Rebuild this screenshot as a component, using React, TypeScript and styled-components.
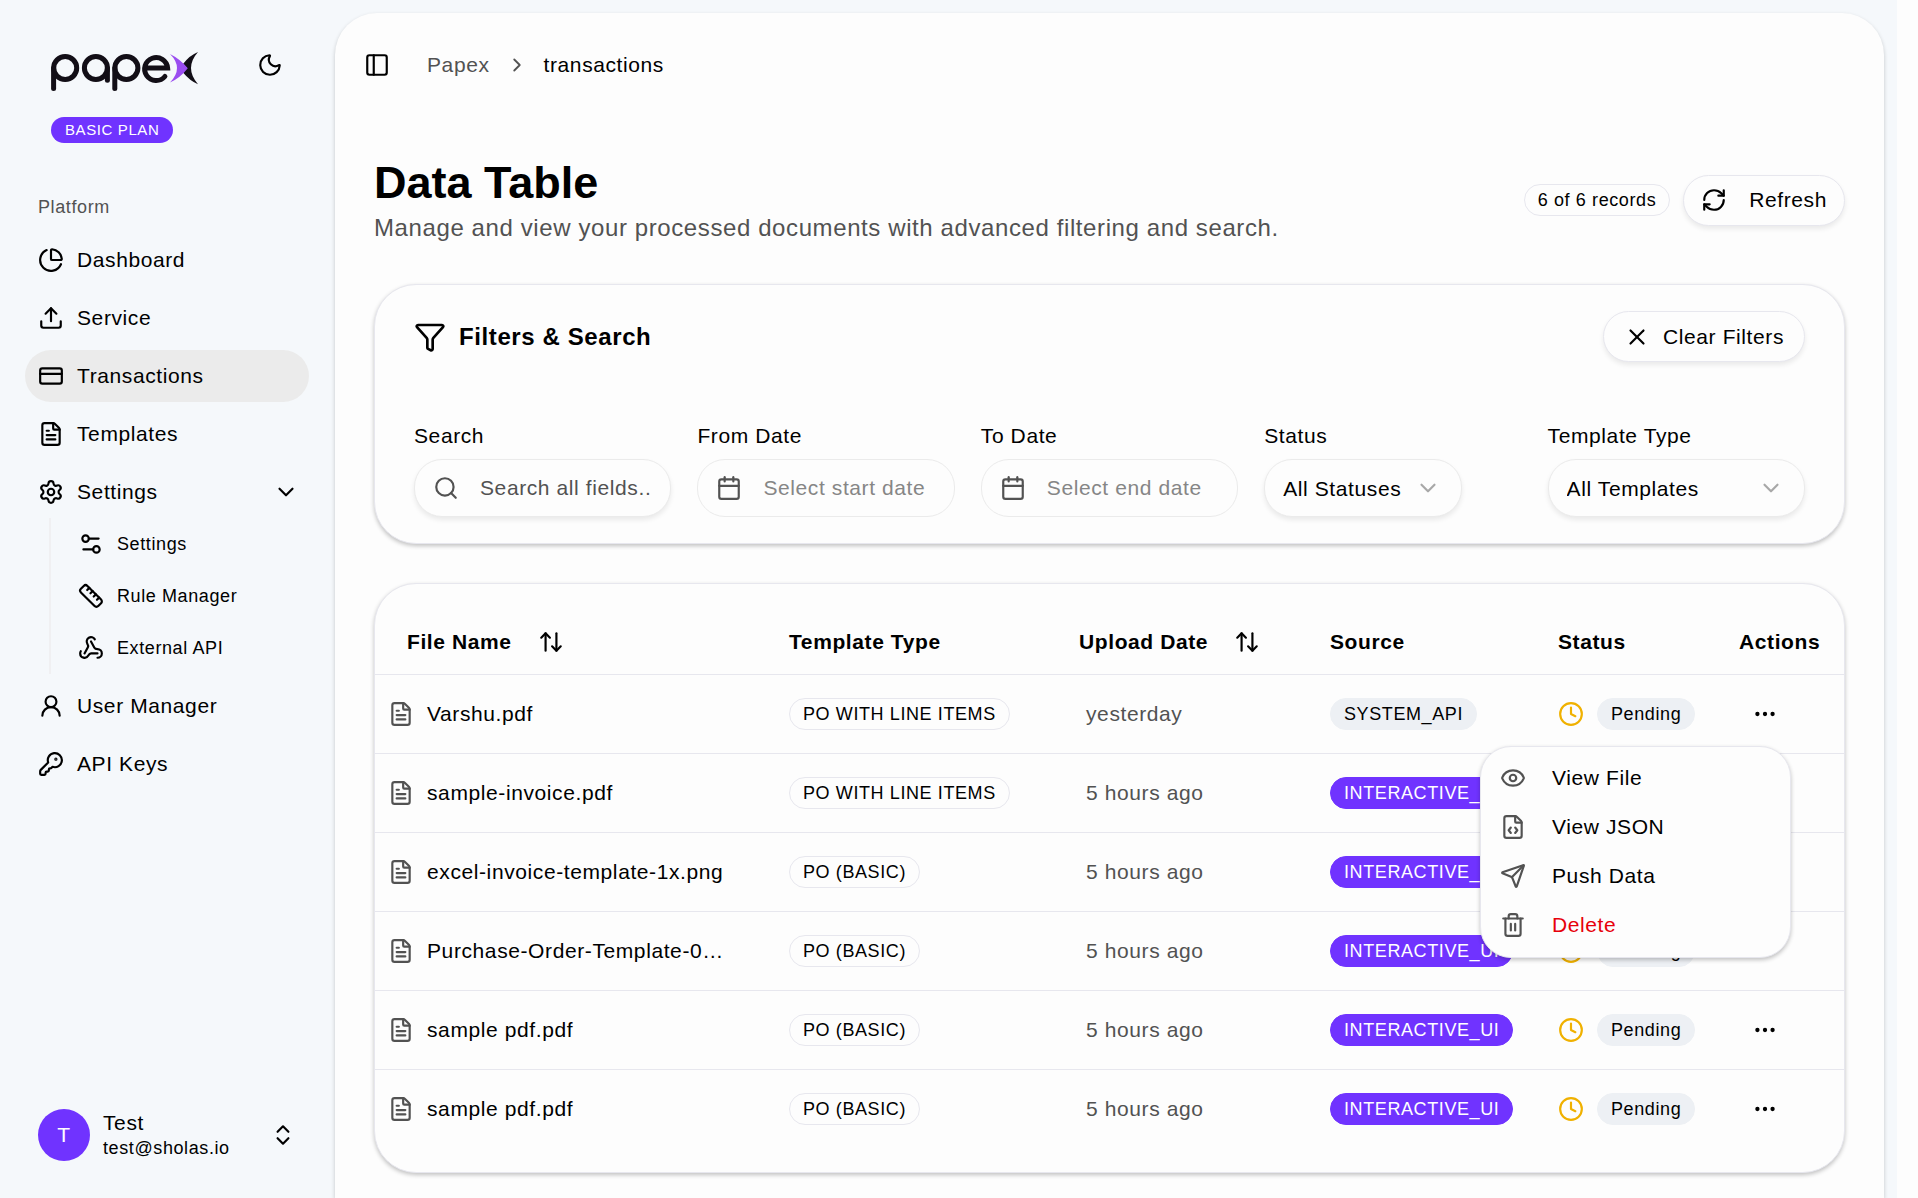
import React from "react";
import styled, { createGlobalStyle, css } from "styled-components";
import {
  ArrowUpDown,
  Calendar,
  ChartPie,
  ChevronDown,
  ChevronRight,
  ChevronsUpDown,
  Clock,
  CreditCard,
  Ellipsis,
  Eye,
  FileCode,
  FileText,
  Funnel,
  KeyRound,
  Moon,
  PanelLeft,
  RefreshCw,
  Ruler,
  Search,
  Send,
  Settings,
  Settings2,
  Trash2,
  Upload,
  UserRound,
  Webhook,
  X,
} from "lucide-react";

const color = {
  background: "#fdfdfd",
  sidebar: "#f5f8fb",
  text: "#000000",
  muted: "#525252",
  faint: "#868686",
  border: "#e7e7ee",
  input: "#ebebeb",
  accent: "#ebebeb",
  guide: "#f0f0f2",
  primary: "#7033ff",
  secondary: "#edf0f4",
  warning: "#f0b100",
  danger: "#e7000b",
};

const shadow = {
  small: "0 3px 5px rgba(0, 0, 0, 0.08)",
  card: "0 2px 4px rgba(0, 0, 0, 0.24)",
};

const ICON = 26;

const GlobalStyle = createGlobalStyle`
  *, *::before, *::after { box-sizing: border-box; }
  html, body { margin: 0; background: ${color.background}; }
  body {
    overflow: hidden;
    color: ${color.text};
    font-family: "Liberation Sans", Arial, sans-serif;
    font-size: 24px;
    letter-spacing: 0.025em;
  }
  button, input, select {
    margin: 0;
    padding: 0;
    border: 0;
    background: none;
    color: inherit;
    font: inherit;
    letter-spacing: inherit;
  }
  button { cursor: pointer; }
  a { color: inherit; text-decoration: none; }
  svg { flex: none; display: block; }
`;

const Shell = styled.div`
  display: flex;
  height: 100vh;
  margin-right: 21px;
  padding: 13px 13px 0 0;
  background: ${color.sidebar};
`;

const Sidebar = styled.aside`
  flex: none;
  width: 335px;
  display: flex;
  flex-direction: column;
  padding: 0 26px 37px 25px;
`;

const Brand = styled.div`
  display: flex;
  align-items: flex-start;
  justify-content: space-between;
  padding: 39px 26px 0;
`;

const ThemeButton = styled.button`
  display: flex;
`;

const Plan = styled.span`
  align-self: flex-start;
  margin: 26px 26px 0;
  padding: 0 14px;
  border-radius: 13px;
  background: ${color.primary};
  color: #ffffff;
  font-size: 15px;
  line-height: 26px;
`;

const SectionTitle = styled.h2`
  margin: 49px 13px 12px;
  color: ${color.muted};
  font-size: 18px;
  font-weight: 400;
  line-height: 30px;
`;

const NavList = styled.ul`
  display: flex;
  flex-direction: column;
  gap: 6px;
  margin: 0;
  padding: 0;
  list-style: none;
`;

const NavLink = styled.a<{ $active?: boolean }>`
  display: flex;
  align-items: center;
  gap: 13px;
  height: 52px;
  padding: 0 10px 0 13px;
  border-radius: 26px;
  background: ${(p) => (p.$active ? color.accent : "transparent")};
  font-size: 21px;
`;

const NavText = styled.span`
  flex: 1;
`;

const SubList = styled.ul`
  margin: 0 0 0 24px;
  padding: 0 0 0 14px;
  border-left: 2px solid ${color.guide};
  list-style: none;
`;

const SubLink = styled.a`
  display: flex;
  align-items: center;
  gap: 13px;
  height: 52px;
  padding-left: 13px;
  font-size: 18px;
`;

const Account = styled.button`
  display: flex;
  align-items: center;
  gap: 13px;
  margin-top: auto;
  padding: 0 13px;
  text-align: left;
`;

const Avatar = styled.span`
  display: grid;
  place-items: center;
  width: 52px;
  height: 52px;
  border-radius: 50%;
  background: ${color.primary};
  color: #ffffff;
  font-size: 21px;
`;

const AccountText = styled.span`
  flex: 1;
  display: flex;
  flex-direction: column;
`;

const AccountName = styled.span`
  font-size: 21px;
  line-height: 26px;
`;

const AccountMail = styled.span`
  font-size: 18px;
  line-height: 24px;
`;

const Panel = styled.main`
  flex: 1;
  min-width: 0;
  padding: 0 39px;
  border-radius: 42px 42px 0 0;
  background: ${color.background};
  box-shadow: 0 2px 4px rgba(0, 0, 0, 0.2);
`;

const TopBar = styled.header`
  display: flex;
  align-items: center;
  height: 104px;
  margin-left: -10px;
  gap: 37px;
`;

const ToggleButton = styled.button`
  display: flex;
`;

const Crumbs = styled.nav`
  display: flex;
  align-items: center;
  gap: 16px;
  color: ${color.muted};
  font-size: 21px;
`;

const CurrentCrumb = styled.span`
  color: ${color.text};
`;

const PageHead = styled.section`
  display: flex;
  align-items: center;
  justify-content: space-between;
  padding: 37px 0 38px;
`;

const PageTitle = styled.h1`
  margin: 2px 0 0;
  font-size: 45px;
  font-weight: 700;
  line-height: 54px;
  letter-spacing: normal;
`;

const PageText = styled.p`
  margin: 0;
  color: ${color.muted};
  font-size: 24px;
  line-height: 36px;
`;

const HeadActions = styled.div`
  display: flex;
  align-items: center;
  gap: 13px;
`;

const Badge = styled.span<{ $tone?: "outline" | "primary" | "secondary" }>`
  display: inline-block;
  padding: 0 13px;
  border: 1px solid transparent;
  border-radius: 16px;
  font-size: 18px;
  line-height: 30px;
  white-space: nowrap;
  ${(p) =>
    p.$tone === "primary"
      ? css`
          background: ${color.primary};
          border-color: ${color.primary};
          color: #ffffff;
        `
      : p.$tone === "secondary"
        ? css`
            background: ${color.secondary};
            border-color: ${color.secondary};
          `
        : css`
            border-color: ${color.border};
          `}
`;

const PillButton = styled.button<{ $gap: number; $inset: number }>`
  display: flex;
  align-items: center;
  gap: ${(p) => p.$gap}px;
  height: 51px;
  padding: 0 ${(p) => p.$inset}px;
  border: 1px solid ${color.border};
  border-radius: 26px;
  background: ${color.background};
  box-shadow: ${shadow.small};
  font-size: 21px;
`;

const Card = styled.section`
  border: 1px solid ${color.border};
  border-radius: 42px;
  background: ${color.background};
  box-shadow: ${shadow.card};
`;

const FilterCard = styled(Card)`
  margin-bottom: 39px;
  padding: 26px 39px;
`;

const FilterHead = styled.div`
  display: flex;
  align-items: center;
  justify-content: space-between;
  margin-bottom: 58px;
`;

const FilterTitle = styled.h2`
  display: flex;
  align-items: center;
  gap: 13px;
  margin: 0;
  font-size: 24px;
  font-weight: 700;
`;

const FilterGrid = styled.div`
  display: grid;
  grid-template-columns: repeat(5, minmax(0, 1fr));
  gap: 26px;
`;

const Field = styled.div`
  display: flex;
  flex-direction: column;
  align-items: flex-start;
  gap: 7px;
`;

const FieldLabel = styled.label`
  font-size: 21px;
  line-height: 32px;
`;

const Control = styled.div<{ $raised?: boolean; $hug?: boolean }>`
  display: flex;
  align-items: center;
  gap: 21px;
  width: ${(p) => (p.$hug ? "198px" : "100%")};
  height: 58px;
  padding: 0 18px;
  border: 1px solid ${color.input};
  border-radius: 28px;
  background: ${color.background};
  box-shadow: ${(p) => (p.$raised ? shadow.small : "none")};
  color: ${color.muted};
`;

const TextInput = styled.input<{ $faint?: boolean }>`
  flex: 1;
  min-width: 0;
  height: 100%;
  outline: none;
  color: ${color.text};
  font-size: 21px;
  &::placeholder {
    color: ${(p) => (p.$faint ? color.faint : color.muted)};
    opacity: 1;
  }
`;

const Select = styled.select`
  flex: 1;
  min-width: 0;
  height: 100%;
  appearance: none;
  outline: none;
  color: ${color.text};
  font-size: 21px;
`;

const SelectArrow = styled(ChevronDown)`
  margin: 0 2px 0 -21px;
  color: #a8a8a8;
`;

const TableCard = styled(Card)`
  padding: 26px 0 24px;
`;

const Table = styled.table`
  width: 100%;
  border-collapse: collapse;
  table-layout: fixed;
  font-size: 21px;
`;

const Col = styled.col<{ $width?: number }>`
  width: ${(p) => (p.$width ? `${p.$width}px` : "auto")};
`;

const HeadCell = styled.th`
  height: 64px;
  padding: 0 13px;
  border-bottom: 1px solid ${color.border};
  font-weight: 700;
  text-align: left;
  white-space: nowrap;
`;

const SortButton = styled.button<{ $inset?: boolean }>`
  display: flex;
  align-items: center;
  gap: 26px;
  padding-left: ${(p) => (p.$inset ? 19 : 0)}px;
`;

const Row = styled.tr`
  & + & > td {
    border-top: 1px solid ${color.border};
  }
`;

const Cell = styled.td`
  height: 79px;
  padding: 0 13px;
  white-space: nowrap;
`;

const FileCell = styled.div`
  display: flex;
  align-items: center;
  gap: 13px;
  svg {
    color: ${color.muted};
  }
`;

const DateText = styled.span`
  padding-left: 7px;
  color: ${color.muted};
`;

const StatusCell = styled.div`
  display: flex;
  align-items: center;
  gap: 13px;
  > svg {
    color: ${color.warning};
  }
`;

const MenuAnchor = styled.div`
  position: relative;
  width: 52px;
`;

const MoreButton = styled.button`
  display: grid;
  place-items: center;
  width: 52px;
  height: 52px;
`;

const Menu = styled.div`
  position: absolute;
  z-index: 2;
  top: 58px;
  right: 0;
  width: 311px;
  padding: 7px;
  border: 1px solid ${color.border};
  border-radius: 31px;
  background: ${color.background};
  box-shadow: ${shadow.card};
`;

const MenuItem = styled.button<{ $danger?: boolean }>`
  display: flex;
  align-items: center;
  gap: 26px;
  width: 100%;
  height: 49px;
  padding: 0 12px;
  color: ${(p) => (p.$danger ? color.danger : color.text)};
  font-size: 21px;
  svg {
    color: ${color.muted};
  }
`;

const Logo = () => (
  <svg width="147" height="39" viewBox="0 0 147 39" role="img" aria-label="Papex" fill="none">
    <g stroke="#120e16" strokeWidth="5" strokeLinecap="round">
      <circle cx="14.2" cy="16" r="11.5" />
      <line x1="2.6" y1="16" x2="2.6" y2="36.4" />
      <circle cx="44.9" cy="16" r="11.5" />
      <line x1="56.4" y1="16" x2="56.4" y2="28.2" />
      <circle cx="75.4" cy="16" r="11.5" />
      <line x1="63.8" y1="16" x2="63.8" y2="36.4" />
      <path d="M94 16h22.600a11.500 11.500 0 1 0 -2.700 8.500" />
    </g>
    <path d="M147 0Q139 3 132 12L136 16L132 20.500Q139 29 147 32.200Q133 16 147 0Z" fill="#120e16" />
    <path d="M119 2Q129 7 136.800 16.200Q129 26 119 30.500Q133 16 119 2Z" fill="#9a4df0" />
  </svg>
);

const mainNav = [
  { label: "Dashboard", icon: ChartPie },
  { label: "Service", icon: Upload },
  { label: "Transactions", icon: CreditCard, active: true },
  { label: "Templates", icon: FileText },
];

const settingsNav = [
  { label: "Settings", icon: Settings2 },
  { label: "Rule Manager", icon: Ruler },
  { label: "External API", icon: Webhook },
];

const lowerNav = [
  { label: "User Manager", icon: UserRound },
  { label: "API Keys", icon: KeyRound },
];

type Source = "SYSTEM_API" | "INTERACTIVE_UI";

const documents: { file: string; template: string; date: string; source: Source }[] = [
  { file: "Varshu.pdf", template: "PO WITH LINE ITEMS", date: "yesterday", source: "SYSTEM_API" },
  { file: "sample-invoice.pdf", template: "PO WITH LINE ITEMS", date: "5 hours ago", source: "INTERACTIVE_UI" },
  { file: "excel-invoice-template-1x.png", template: "PO (BASIC)", date: "5 hours ago", source: "INTERACTIVE_UI" },
  { file: "Purchase-Order-Template-0…", template: "PO (BASIC)", date: "5 hours ago", source: "INTERACTIVE_UI" },
  { file: "sample pdf.pdf", template: "PO (BASIC)", date: "5 hours ago", source: "INTERACTIVE_UI" },
  { file: "sample pdf.pdf", template: "PO (BASIC)", date: "5 hours ago", source: "INTERACTIVE_UI" },
];

const AppSidebar = () => (
  <Sidebar>
    <Brand>
      <Logo />
      <ThemeButton aria-label="Toggle theme">
        <Moon size={ICON} />
      </ThemeButton>
    </Brand>
    <Plan>BASIC PLAN</Plan>
    <SectionTitle>Platform</SectionTitle>
    <NavList>
      {mainNav.map(({ label, icon: Icon, active }) => (
        <li key={label}>
          <NavLink href="#" $active={active}>
            <Icon size={ICON} />
            <NavText>{label}</NavText>
          </NavLink>
        </li>
      ))}
      <li>
        <NavLink href="#">
          <Settings size={ICON} />
          <NavText>Settings</NavText>
          <ChevronDown size={ICON} />
        </NavLink>
        <SubList>
          {settingsNav.map(({ label, icon: Icon }) => (
            <li key={label}>
              <SubLink href="#">
                <Icon size={ICON} />
                {label}
              </SubLink>
            </li>
          ))}
        </SubList>
      </li>
      {lowerNav.map(({ label, icon: Icon }) => (
        <li key={label}>
          <NavLink href="#">
            <Icon size={ICON} />
            <NavText>{label}</NavText>
          </NavLink>
        </li>
      ))}
    </NavList>
    <Account>
      <Avatar>T</Avatar>
      <AccountText>
        <AccountName>Test</AccountName>
        <AccountMail>test@sholas.io</AccountMail>
      </AccountText>
      <ChevronsUpDown size={ICON} />
    </Account>
  </Sidebar>
);

const Filters = () => (
  <FilterCard>
    <FilterHead>
      <FilterTitle>
        <Funnel size={32} />
        Filters &amp; Search
      </FilterTitle>
      <PillButton $gap={13} $inset={20}>
        <X size={ICON} />
        Clear Filters
      </PillButton>
    </FilterHead>
    <FilterGrid>
      <Field>
        <FieldLabel htmlFor="search">Search</FieldLabel>
        <Control $raised>
          <Search size={ICON} />
          <TextInput id="search" placeholder="Search all fields.." />
        </Control>
      </Field>
      <Field>
        <FieldLabel htmlFor="from">From Date</FieldLabel>
        <Control>
          <Calendar size={ICON} />
          <TextInput id="from" placeholder="Select start date" $faint />
        </Control>
      </Field>
      <Field>
        <FieldLabel htmlFor="to">To Date</FieldLabel>
        <Control>
          <Calendar size={ICON} />
          <TextInput id="to" placeholder="Select end date" $faint />
        </Control>
      </Field>
      <Field>
        <FieldLabel htmlFor="status">Status</FieldLabel>
        <Control $raised $hug>
          <Select id="status">
            <option>All Statuses</option>
          </Select>
          <SelectArrow size={ICON} />
        </Control>
      </Field>
      <Field>
        <FieldLabel htmlFor="template">Template Type</FieldLabel>
        <Control $raised>
          <Select id="template">
            <option>All Templates</option>
          </Select>
          <SelectArrow size={ICON} />
        </Control>
      </Field>
    </FilterGrid>
  </FilterCard>
);

const RowMenu = () => (
  <Menu role="menu">
    <MenuItem role="menuitem">
      <Eye size={ICON} />
      View File
    </MenuItem>
    <MenuItem role="menuitem">
      <FileCode size={ICON} />
      View JSON
    </MenuItem>
    <MenuItem role="menuitem">
      <Send size={ICON} />
      Push Data
    </MenuItem>
    <MenuItem role="menuitem" $danger>
      <Trash2 size={ICON} />
      Delete
    </MenuItem>
  </Menu>
);

const Documents = () => (
  <TableCard>
    <Table>
      <colgroup>
        <Col />
        <Col $width={290} />
        <Col $width={251} />
        <Col $width={228} />
        <Col $width={181} />
        <Col $width={118} />
      </colgroup>
      <thead>
        <tr>
          <HeadCell>
            <SortButton $inset>
              File Name
              <ArrowUpDown size={ICON} />
            </SortButton>
          </HeadCell>
          <HeadCell>Template Type</HeadCell>
          <HeadCell>
            <SortButton>
              Upload Date
              <ArrowUpDown size={ICON} />
            </SortButton>
          </HeadCell>
          <HeadCell>Source</HeadCell>
          <HeadCell>Status</HeadCell>
          <HeadCell>Actions</HeadCell>
        </tr>
      </thead>
      <tbody>
        {documents.map((doc, i) => (
          <Row key={i}>
            <Cell>
              <FileCell>
                <FileText size={ICON} />
                {doc.file}
              </FileCell>
            </Cell>
            <Cell>
              <Badge>{doc.template}</Badge>
            </Cell>
            <Cell>
              <DateText>{doc.date}</DateText>
            </Cell>
            <Cell>
              <Badge $tone={doc.source === "SYSTEM_API" ? "secondary" : "primary"}>{doc.source}</Badge>
            </Cell>
            <Cell>
              <StatusCell>
                <Clock size={ICON} />
                <Badge $tone="secondary">Pending</Badge>
              </StatusCell>
            </Cell>
            <Cell>
              <MenuAnchor>
                <MoreButton aria-label="Row actions">
                  <Ellipsis size={ICON} />
                </MoreButton>
                {i === 0 && <RowMenu />}
              </MenuAnchor>
            </Cell>
          </Row>
        ))}
      </tbody>
    </Table>
  </TableCard>
);

export default function App() {
  return (
    <>
      <GlobalStyle />
      <Shell>
        <AppSidebar />
        <Panel>
          <TopBar>
            <ToggleButton aria-label="Toggle sidebar">
              <PanelLeft size={ICON} />
            </ToggleButton>
            <Crumbs aria-label="Breadcrumb">
              <a href="#">Papex</a>
              <ChevronRight size={22} />
              <CurrentCrumb>transactions</CurrentCrumb>
            </Crumbs>
          </TopBar>
          <PageHead>
            <div>
              <PageTitle>Data Table</PageTitle>
              <PageText>Manage and view your processed documents with advanced filtering and search.</PageText>
            </div>
            <HeadActions>
              <Badge>6 of 6 records</Badge>
              <PillButton $gap={22} $inset={17}>
                <RefreshCw size={ICON} />
                Refresh
              </PillButton>
            </HeadActions>
          </PageHead>
          <Filters />
          <Documents />
        </Panel>
      </Shell>
    </>
  );
}
